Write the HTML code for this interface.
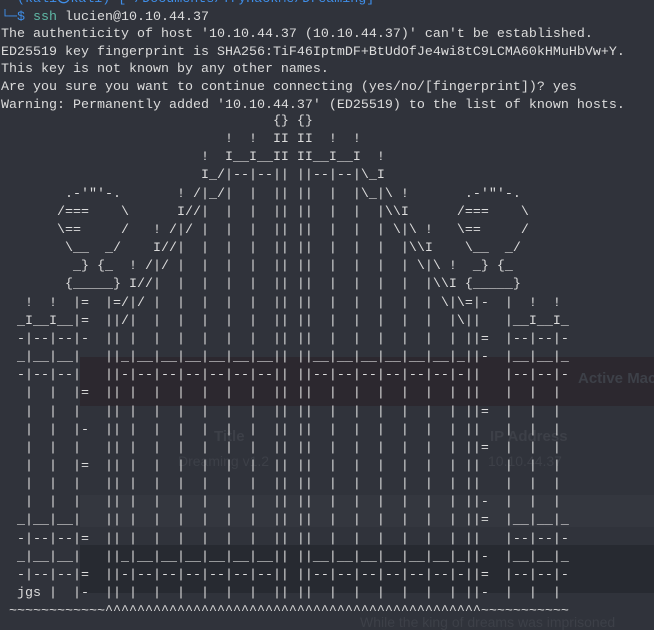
<!DOCTYPE html>
<html><head><meta charset="utf-8"><style>
html,body{margin:0;padding:0;width:654px;height:629px;overflow:hidden;background:#30333b;}
.bg{position:absolute;left:80px;width:574px;}
pre{margin:0;position:absolute;left:1px;font-family:"Liberation Mono","DejaVu Sans Mono",monospace;font-size:13.33px;color:#dcdcdc;white-space:pre;}
.ghost{position:absolute;font-family:"Liberation Sans",sans-serif;color:#3d4048;font-weight:bold;white-space:nowrap;}
.b{color:#3f8ee8}.g{color:#5fb8a6}
</style></head><body>
<div class="bg" style="top:357px;height:49px;background:#2c282f"></div>
<div class="bg" style="top:495px;height:32px;background:#34373f"></div>
<div class="bg" style="top:545px;height:48px;background:#272a31"></div>
<div class="ghost" style="left:578px;top:370px;font-size:15px">Active Mac</div>
<div class="ghost" style="left:214px;top:428px;font-size:15px">Title</div>
<div class="ghost" style="left:490px;top:428px;font-size:15px">IP Address</div>
<div class="ghost" style="left:178px;top:453px;font-size:14px;font-weight:normal">Dreaming v1.2</div>
<div class="ghost" style="left:488px;top:453px;font-size:14px;font-weight:normal">10.10.44.37</div>
<div class="ghost" style="left:360px;top:614px;font-size:14px;font-weight:normal">While the king of dreams was imprisoned</div>
<pre style="top:-9px;line-height:17.6px"><span class="b">  (kali㉿kali)-[~/Documents/TryHackMe/Dreaming]</span>
<span class="b">└─$</span> <span class="g">ssh</span> lucien@10.10.44.37
The authenticity of host '10.10.44.37 (10.10.44.37)' can't be established.
ED25519 key fingerprint is SHA256:TiF46IptmDF+BtUdOfJe4wi8tC9LCMA60kHMuHbVw+Y.
This key is not known by any other names.
Are you sure you want to continue connecting (yes/no/[fingerprint])? yes
Warning: Permanently added '10.10.44.37' (ED25519) to the list of known hosts.</pre>
<pre style="top:113px;line-height:18.15px">                                  {} {}
                            !  !  II II  !  !
                         !  I__I__II II__I__I  !
                         I_/|--|--|| ||--|--|\_I
        .-'"'-.       ! /|_/|  |  || ||  |  |\_|\ !       .-'"'-.
       /===    \      I//|  |  |  || ||  |  |  |\\I      /===    \
       \==     /   ! /|/ |  |  |  || ||  |  |  | \|\ !   \==     /
        \__  _/    I//|  |  |  |  || ||  |  |  |  |\\I    \__  _/
         _} {_  ! /|/ |  |  |  |  || ||  |  |  |  | \|\ !  _} {_
        {_____} I//|  |  |  |  |  || ||  |  |  |  |  |\\I {_____}
   !  !  |=  |=/|/ |  |  |  |  |  || ||  |  |  |  |  | \|\=|-  |  !  !
  _I__I__|=  ||/|  |  |  |  |  |  || ||  |  |  |  |  |  |\||   |__I__I_
  -|--|--|-  || |  |  |  |  |  |  || ||  |  |  |  |  |  | ||=  |--|--|-
  _|__|__|   ||_|__|__|__|__|__|__|| ||__|__|__|__|__|__|_||-  |__|__|_
  -|--|--|   ||-|--|--|--|--|--|--|| ||--|--|--|--|--|--|-||   |--|--|-
   |  |  |=  || |  |  |  |  |  |  || ||  |  |  |  |  |  | ||   |  |  |
   |  |  |   || |  |  |  |  |  |  || ||  |  |  |  |  |  | ||=  |  |  |
   |  |  |-  || |  |  |  |  |  |  || ||  |  |  |  |  |  | ||   |  |  |
   |  |  |   || |  |  |  |  |  |  || ||  |  |  |  |  |  | ||=  |  |  |
   |  |  |=  || |  |  |  |  |  |  || ||  |  |  |  |  |  | ||   |  |  |
   |  |  |   || |  |  |  |  |  |  || ||  |  |  |  |  |  | ||   |  |  |
   |  |  |   || |  |  |  |  |  |  || ||  |  |  |  |  |  | ||-  |  |  |
  _|__|__|   || |  |  |  |  |  |  || ||  |  |  |  |  |  | ||=  |__|__|_
  -|--|--|=  || |  |  |  |  |  |  || ||  |  |  |  |  |  | ||   |--|--|-
  _|__|__|   ||_|__|__|__|__|__|__|| ||__|__|__|__|__|__|_||-  |__|__|_
  -|--|--|=  ||-|--|--|--|--|--|--|| ||--|--|--|--|--|--|-||=  |--|--|-
  jgs |  |-  || |  |  |  |  |  |  || ||  |  |  |  |  |  | ||-  |  |  |
 ~~~~~~~~~~~~^^^^^^^^^^^^^^^^^^^^^^^^^^^^^^^^^^^^^^^^^^^^^^^~~~~~~~~~~~</pre>
</body></html>
